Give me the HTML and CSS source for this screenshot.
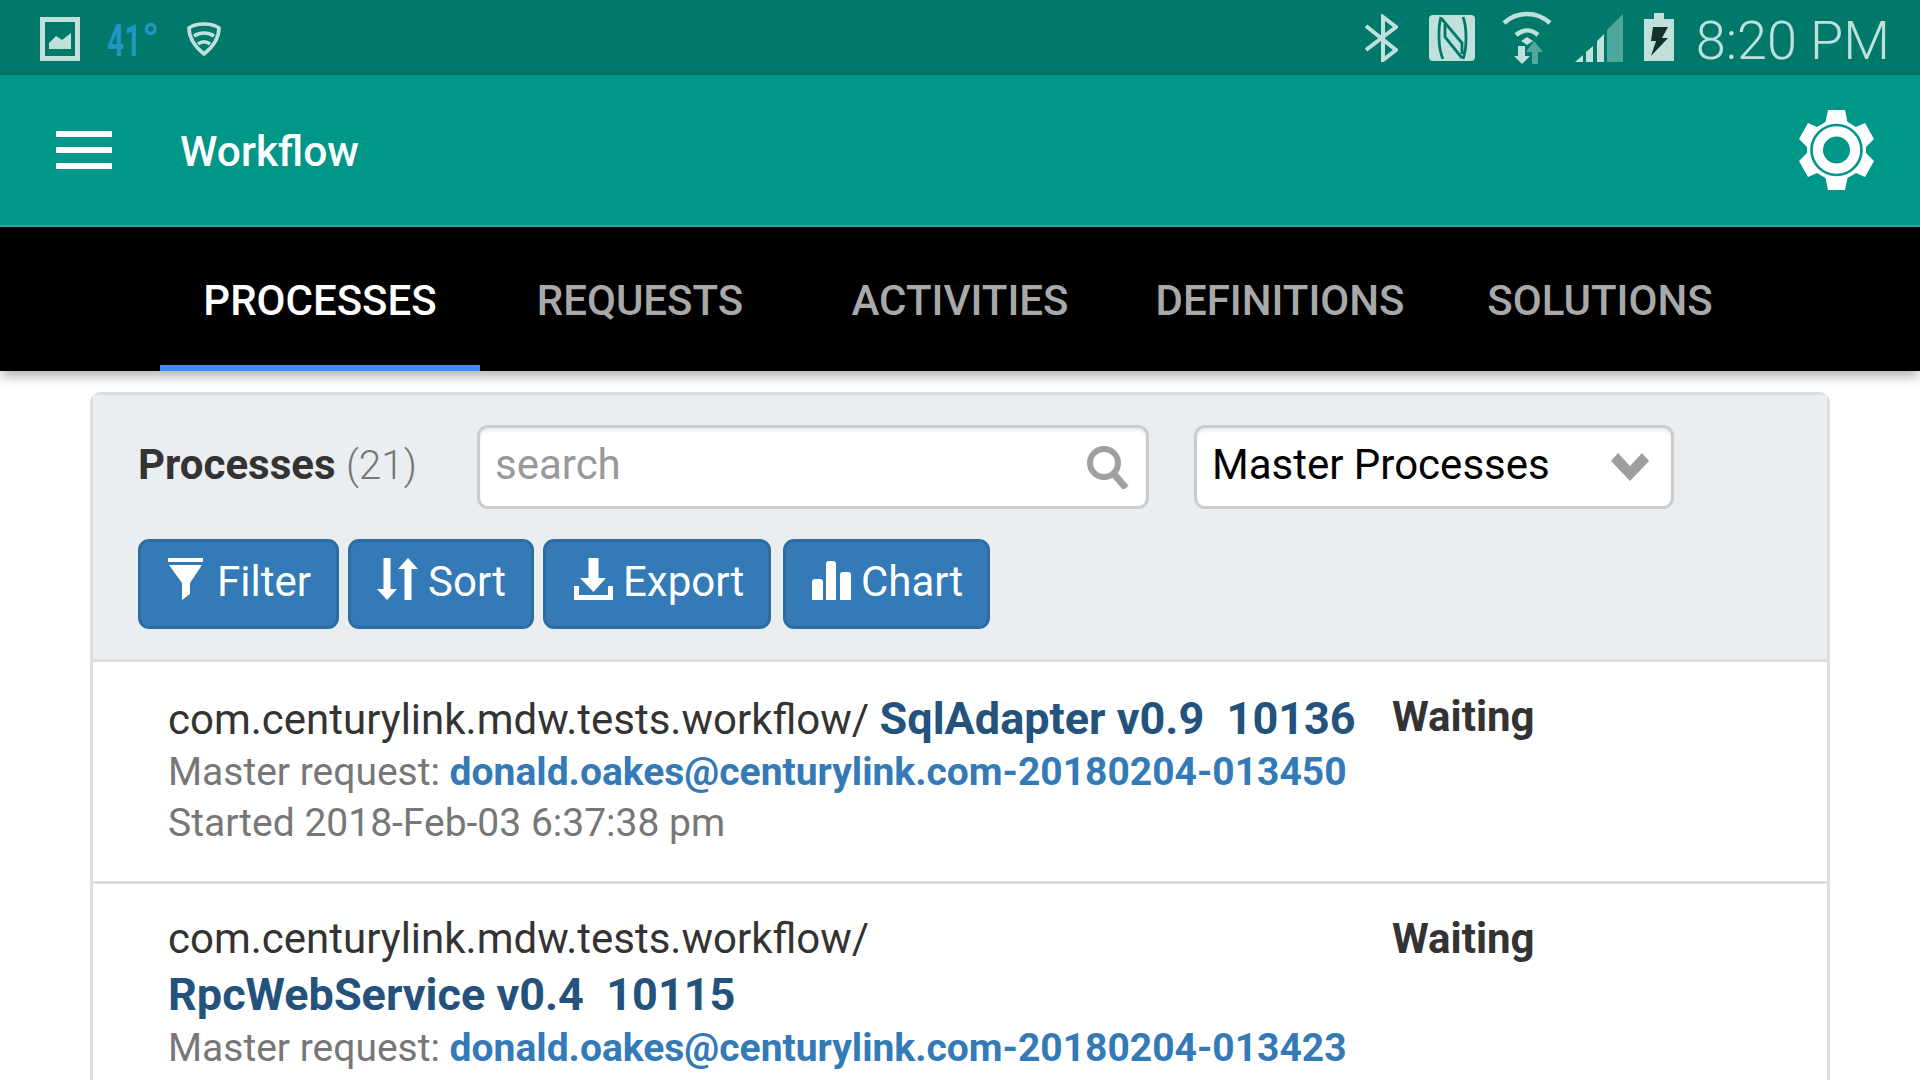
FILE: index.html
```html
<!DOCTYPE html>
<html lang="en">
<head>
<meta charset="utf-8">
<title>Workflow</title>
<link rel="stylesheet" href="styles.css">
</head>
<body>
<div class="status">
  <div class="status-left">
    <svg class="ic-pic" viewBox="0 0 40 44"><path fill="#bfe0db" fill-rule="evenodd" d="M0 0h40v44H0zM5 5v34h30V5z"/><path fill="#bfe0db" d="M9 32v-6l7-7 6 4 9-7v16z"/></svg>
    <div class="temp"><span class="digits">41</span><span class="deg">°</span></div>
    <svg class="ic-shield" viewBox="0 0 34 34"><path fill="none" stroke="#bfe0db" stroke-width="3.600" stroke-linejoin="round" d="M17 2c6 0 11 1 15 4 0 9-5 18-15 26C7 24 2 15 2 6c4-3 9-4 15-4z"/><path fill="none" stroke="#bfe0db" stroke-width="3.600" d="M7 14c6-4 14-4 20 0M11 22c4-3 8-3 12 0"/></svg>
  </div>
  <div class="status-right">
    <svg class="ic-bt" viewBox="0 0 33 48"><path fill="none" stroke="#bfe0db" stroke-width="4" d="M1 12l30 24-13 10V3l13 10L1 36"/></svg>
    <svg class="ic-nfc" viewBox="0 0 46 46"><rect width="46" height="46" rx="4" fill="#bfe0db"/><path fill="none" stroke="#00796b" stroke-width="2.800" d="M12 2c-3 10-3 32 2 42M34 2c4 10 4 32 0 42M12 3l21 25v11M33 43L16 22V9"/></svg>
    <svg class="ic-wifi" viewBox="0 0 50 53"><g fill="none" stroke="#bfe0db" stroke-width="4.500"><path d="M2 12c13-12 33-12 46 0M14 24c7-6 15-6 22 0"/></g><path fill="#bfe0db" d="M19 30l6-4 6 4-6 4zM16 35h7v10h5l-8 8-8-8h4z"/><path fill="#53a89c" d="M32 30l9 11h-5v12h-6V41h-6z"/></svg>
    <svg class="ic-signal" viewBox="0 0 48 48"><path fill="#4da79a" d="M48 0v48H32V16z"/><path fill="#bfe0db" d="M29 20v28h-7V27zM18 32v16h-7V38zM8 41v7H0z"/></svg>
    <svg class="ic-batt" viewBox="0 0 30 48"><path fill="#bfe0db" d="M10 0h10v6h10v42H0V6h10z"/><path fill="#13302d" d="M9 14h15l-6 11h6L7 43l5-15H7z"/></svg>
    <span class="clock">8:20 PM</span>
  </div>
</div>

<header class="toolbar">
  <div class="burger"><i></i><i></i><i></i></div>
  <h1 class="title">Workflow</h1>
  <svg class="gear" viewBox="0 0 75 80"><path fill="#fff" d="M29 0H46L48.500 12 57 17 66 13 75 29 67 37V43L75 51 66 67 57 63 48.500 68 46 80H29L26.500 68 18 63 9 67 0 51 8 43V37L0 29 9 13 18 17 26.500 12Z"/><circle cx="37.500" cy="40" r="25" fill="none" stroke="#009688" stroke-width="2.600"/><circle cx="37.500" cy="40" r="13.500" fill="#009688"/></svg>
</header>

<nav class="tabs">
  <a class="tab active">PROCESSES</a>
  <a class="tab">REQUESTS</a>
  <a class="tab">ACTIVITIES</a>
  <a class="tab">DEFINITIONS</a>
  <a class="tab">SOLUTIONS</a>
</nav>

<main class="panel">
  <section class="panel-head">
    <div class="row-a">
      <div class="heading"><b>Processes</b> <span>(21)</span></div>
      <div class="field search">
        <span class="ph">search</span>
        <svg class="ic-search" viewBox="0 0 44 44"><circle cx="18" cy="18" r="14" fill="none" stroke="#a0a0a0" stroke-width="6"/><path stroke="#a0a0a0" stroke-width="7" d="M27 28l13 15"/></svg>
      </div>
      <div class="field select">
        <span>Master Processes</span>
        <svg class="ic-chev" viewBox="0 0 38 28"><path fill="#9e9e9e" d="M0 8l7-8 12 13L31 0l7 8-19 20z"/></svg>
      </div>
    </div>
    <div class="row-b">
      <button class="btn b-filter"><svg class="ic-f" viewBox="0 0 35 42"><path fill="#fff" d="M0 0h35v4H0zM1 7h33L22 25v11l-8 6V25z"/></svg>Filter</button>
      <button class="btn b-sort"><svg class="ic-s" viewBox="0 0 41 42"><path fill="#fff" d="M6.500 0h7v31H20L10 42 0 31h6.500zM31 0l10 11h-6.500v31h-7V11H21z"/></svg>Sort</button>
      <button class="btn b-export"><svg class="ic-e" viewBox="0 0 39 42"><path fill="#fff" d="M14.500 0h10v20H32L19.500 34 6 20h8.500zM0 28h5v9h29v-9h5v14H0z"/></svg>Export</button>
      <button class="btn b-chart"><svg class="ic-c" viewBox="0 0 39 39"><path fill="#fff" d="M0 39V21q0-3 3-3h5q3 0 3 3v18zM14 39V3q0-3 3-3h4q3 0 3 3v36zM28 39V14q0-3 3-3h5q3 0 3 3v25z"/></svg>Chart</button>
    </div>
  </section>

  <article class="item">
    <div class="item-main">
      <div class="line1"><span class="pkg">com.centurylink.mdw.tests.workflow/</span> <a class="proc">SqlAdapter v0.9&nbsp; 10136</a></div>
      <div class="meta">Master request: <a class="req">donald.oakes@centurylink.com-20180204-013450</a></div>
      <div class="meta">Started 2018-Feb-03 6:37:38 pm</div>
    </div>
    <div class="state">Waiting</div>
  </article>
  <article class="item">
    <div class="item-main">
      <div class="line1"><span class="pkg">com.centurylink.mdw.tests.workflow/</span> <a class="proc">RpcWebService v0.4&nbsp; 10115</a></div>
      <div class="meta">Master request: <a class="req">donald.oakes@centurylink.com-20180204-013423</a></div>
    </div>
    <div class="state">Waiting</div>
  </article>
</main>
</body>
</html>
```
FILE: styles.css
```css
* { box-sizing: border-box; }
html, body { margin: 0; height: 1080px; overflow: hidden; background: #fff; }
body { font-family: Roboto, "Noto Sans", sans-serif; color: #333; }
svg { display: block; flex: none; }

.status { height: 75px; background: linear-gradient(#00796b 0, #00796b 71px, #00695e 75px); display: flex; justify-content: space-between; padding: 0 30px 0 40px; }
.status-left { display: flex; align-items: flex-start; }
.ic-pic { width: 40px; height: 44px; margin-top: 17px; }
.temp { width: 52px; display: flex; font-size: 44px; font-weight: 700; line-height: 1; color: #2196c4; margin: 19px 0 0 27px; white-space: nowrap; }
.digits { display: block; width: 35px; transform: scaleX(.68); transform-origin: left top; }
.deg { display: block; font-size: 46px; font-weight: 500; margin-top: -2px; }
.ic-shield { width: 34px; height: 34px; margin: 22px 0 0 28px; }
.status-right { display: flex; align-items: flex-start; }
.ic-bt { width: 33px; height: 48px; margin-top: 14px; }
.ic-nfc { width: 46px; height: 46px; margin: 15px 0 0 31px; }
.ic-wifi { width: 50px; height: 53px; margin: 11px 0 0 27px; }
.ic-signal { width: 48px; height: 48px; margin: 14px 0 0 23px; }
.ic-batt { width: 30px; height: 48px; margin: 13px 0 0 21px; }
.clock { font-size: 54px; font-weight: 300; line-height: 1; color: #bfe0db; margin: 14px 0 0 22px; white-space: nowrap; }

.toolbar { height: 152px; background: #009688; border-bottom: 2px solid #26a69a; display: flex; align-items: center; padding: 0 46px 0 56px; }
.burger { display: flex; flex-direction: column; gap: 10px; width: 56px; }
.burger i { display: block; height: 6px; background: #fff; }
.title { font-size: 42.500px; font-weight: 500; color: #fff; margin: 4px 0 0 68px; flex: 1; line-height: 1; }
.gear { width: 75px; height: 80px; }

.tabs { height: 144px; background: #000; display: flex; padding-left: 160px; box-shadow: 0 8px 10px -2px rgba(0,0,0,.28); position: relative; }
.tab { width: 320px; height: 144px; display: flex; align-items: center; justify-content: center; font-size: 42px; font-weight: 500; color: #a9a9a9; border-bottom: 6px solid transparent; padding-top: 9px; }
.tab.active { color: #fff; border-bottom-color: #448aff; }

.panel { margin: 21px 90px 0; border: 3px solid #ddd; border-bottom: 0; border-radius: 11px 11px 0 0; width: 1740px; }
.panel-head { height: 267px; background: #ebeef1; border-bottom: 3px solid #ddd; padding: 30px 45px 0; }
.row-a { display: flex; align-items: center; height: 84px; }
.heading { font-size: 42px; width: 339px; white-space: nowrap; padding-bottom: 5px; }
.heading span { color: #777; font-weight: 300; font-size: 40.500px; }
.field { height: 84px; background: #fff; border: 3px solid #ccc; border-radius: 11px; display: flex; align-items: center; justify-content: space-between; box-shadow: inset 0 3px 3px rgba(0,0,0,.075); font-size: 42px; padding: 0 15px 6px; }
.search { width: 672px; color: #999; }
.select { width: 480px; margin-left: 45px; color: #000; }
.ic-search { width: 44px; height: 44px; margin: 6px 1px 0 0; }
.ic-chev { width: 38px; height: 28px; margin: 6px 7px 0 0; }
.row-b { display: flex; margin-top: 30px; }
.btn { height: 90px; background: #337ab7; border: 3px solid #2e6da4; border-radius: 11px; color: #fff; font: 400 42px/1 Roboto, sans-serif; display: flex; align-items: center; padding: 0 0 4px; }
.b-filter { width: 201px; padding-left: 27px; }
.b-sort { width: 186px; margin-left: 9px; padding-left: 26px; }
.b-export { width: 228px; margin-left: 9px; padding-left: 28px; }
.b-chart { width: 207px; margin-left: 12px; padding-left: 26px; }
.ic-f { width: 35px; height: 42px; margin: -6px 14px 0 0; }
.ic-s { width: 41px; height: 42px; margin: -6px 10px 0 0; }
.ic-e { width: 39px; height: 42px; margin: -6px 10px 0 0; }
.ic-c { width: 39px; height: 39px; margin: -3px 10px 0 0; }

.item { height: 222px; border-bottom: 3px solid #ddd; padding: 29px 46px 0 75px; display: flex; background: #fff; }
.item-main { width: 1224px; }
.line1 { font-size: 42px; line-height: 56px; width: 1200px; }
.item + .item .line1 { margin-top: -2px; }
.pkg { color: #333; }
.proc { color: #23527c; font-weight: 700; font-size: 45px; white-space: nowrap; }
.meta { font-size: 39px; line-height: 51px; color: #777; }
.line1 + .meta { margin-top: -1px; }
.req { color: #337ab7; font-weight: 700; }
.state { font-size: 42px; font-weight: 700; color: #333; line-height: 53px; margin-top: -1px; }
```
